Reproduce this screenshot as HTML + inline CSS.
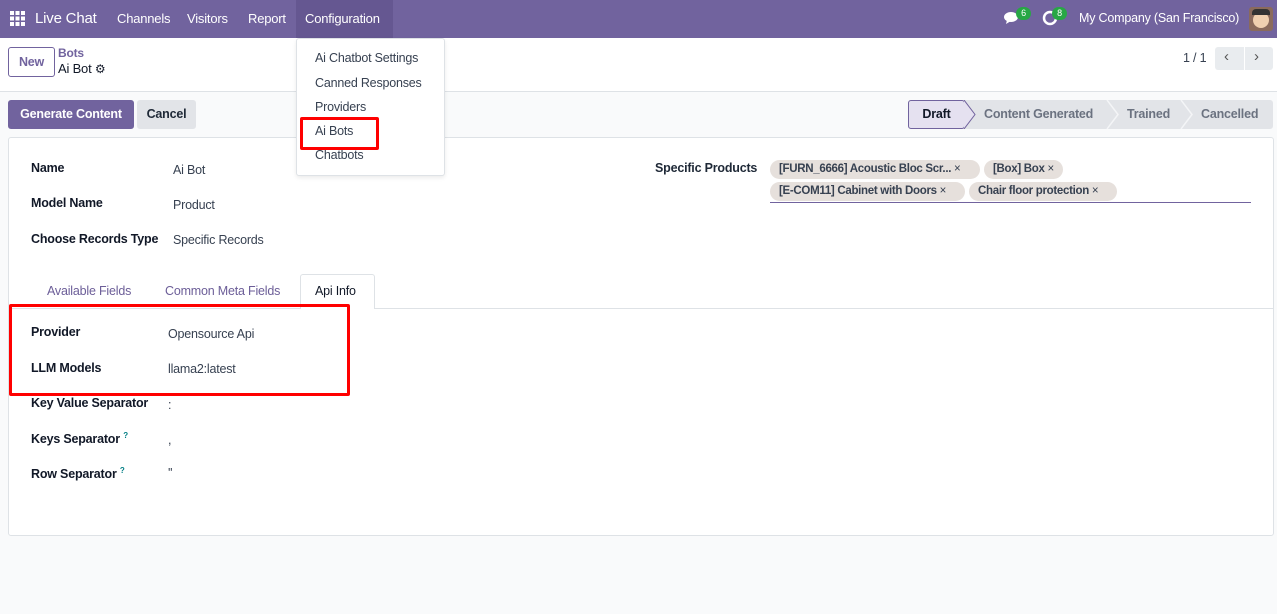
<!DOCTYPE html>
<html><head><style>
*{box-sizing:border-box;margin:0;padding:0}
body{width:1277px;height:614px;background:#f9fafb;font-family:"Liberation Sans",sans-serif;font-size:12.5px;letter-spacing:-0.2px;color:#374151;position:relative;overflow:hidden}
.abs{position:absolute}
.nav{left:0;top:0;width:1277px;height:38px;background:#71639e;color:#fff}
.nav span{position:absolute;top:11px;font-size:13px}
.cp{left:0;top:38px;width:1277px;height:54px;background:#fff;border-bottom:1px solid #dee2e6}
.b{font-weight:bold;color:#1f2937}
.tag{position:absolute;height:19px;background:#e6e0dc;border-radius:10px;font-size:11.5px;letter-spacing:-0.3px;font-weight:bold;color:#374151;padding:3px 9px;white-space:nowrap}
.lbl{position:absolute;left:31px;font-weight:bold;color:#111827}
.val{position:absolute;left:168px;color:#374151}
</style></head><body>
<div class="abs nav">
<svg class="abs" style="left:10px;top:11px" width="15" height="15"><g fill="#fff"><rect x="0" y="0" width="4" height="4"/><rect x="5.5" y="0" width="4" height="4"/><rect x="11" y="0" width="4" height="4"/><rect x="0" y="5.5" width="4" height="4"/><rect x="5.5" y="5.5" width="4" height="4"/><rect x="11" y="5.5" width="4" height="4"/><rect x="0" y="11" width="4" height="4"/><rect x="5.5" y="11" width="4" height="4"/><rect x="11" y="11" width="4" height="4"/></g></svg>
<span style="left:35px;font-size:15px;top:10px">Live Chat</span>
<span style="left:117px">Channels</span>
<span style="left:187px">Visitors</span>
<span style="left:248px">Report</span>
<div class="abs" style="left:296px;top:0;width:97px;height:38px;background:#655791"></div>
<span style="left:305px">Configuration</span>
<svg class="abs" style="left:1004px;top:11px" width="16" height="14"><ellipse cx="7" cy="6" rx="7" ry="5" fill="#fff"/><path d="M3 9 L2 13 L7 10Z" fill="#fff"/></svg>
<div class="abs" style="left:1016px;top:7px;width:15px;height:13px;border-radius:7px;background:#28a745;font-size:9px;text-align:center;line-height:13px">6</div>
<svg class="abs" style="left:1042px;top:10px" width="16" height="16"><circle cx="8" cy="8" r="6" fill="none" stroke="#fff" stroke-width="2.5"/></svg>
<div class="abs" style="left:1052px;top:7px;width:15px;height:13px;border-radius:7px;background:#28a745;font-size:9px;text-align:center;line-height:13px">8</div>
<span style="left:1079px;font-size:12.5px">My Company (San Francisco)</span>
<div class="abs" style="left:1249px;top:7px;width:24px;height:24px;border-radius:3px;background:#8a6a5c"><div class="abs" style="left:4px;top:5px;width:16px;height:16px;border-radius:8px;background:#f0d0b0"></div><div class="abs" style="left:3px;top:2px;width:18px;height:6px;background:#333;border-radius:4px 4px 0 0"></div></div>
</div>
<div class="abs cp"></div>
<div class="abs" style="left:8px;top:47px;width:47px;height:30px;border:1px solid #71639e;border-radius:3px;color:#71639e;font-weight:bold;text-align:center;line-height:28px">New</div>
<div class="abs" style="left:58px;top:46px;font-size:12px;font-weight:bold;color:#71639e">Bots</div>
<div class="abs" style="left:58px;top:61px;font-size:13px;color:#111827">Ai Bot <span style="font-size:12px">⚙</span></div>
<div class="abs" style="left:1183px;top:51px;color:#374151">1 / 1</div>
<div class="abs" style="left:1215px;top:47px;width:58px;height:23px;background:#e9ecef;border-radius:3px;color:#555;font-size:15px"><span class="abs" style="left:9px;top:1px">‹</span><div class="abs" style="left:29px;top:0;width:1px;height:23px;background:#fff"></div><span class="abs" style="left:39px;top:1px">›</span></div>

<div class="abs" style="left:8px;top:100px;width:126px;height:29px;background:#71639e;border-radius:3px;color:#fff;font-weight:bold;text-align:center;line-height:29px">Generate Content</div>
<div class="abs" style="left:137px;top:100px;width:59px;height:29px;background:#e2e4e8;border-radius:3px;color:#1f2937;font-weight:bold;text-align:center;line-height:29px">Cancel</div>

<div class="abs" style="left:908px;top:100px;width:365px;height:29px;background:#e2e4e8;border-radius:3px"></div>
<div class="abs" style="left:908px;top:100px;width:57px;height:29px;background:#e5e1f0;border:1px solid #71639e;border-radius:3px;color:#111827;font-weight:bold;text-align:center;line-height:27px">Draft</div>
<svg class="abs" style="left:964px;top:100px" width="300" height="29"><path d="M0 0 L11 14.5 L0 29" fill="#e5e1f0" stroke="#71639e"/><path d="M143 0 L154 14.5 L143 29 M217 0 L228 14.5 L217 29" fill="none" stroke="#f4f5f7" stroke-width="1.5"/></svg>
<div class="abs" style="left:984px;top:107px;color:#6b7280;font-weight:bold">Content Generated</div>
<div class="abs" style="left:1127px;top:107px;color:#6b7280;font-weight:bold">Trained</div>
<div class="abs" style="left:1201px;top:107px;color:#6b7280;font-weight:bold">Cancelled</div>

<div class="abs" style="left:8px;top:137px;width:1266px;height:399px;background:#fff;border:1px solid #dee2e6;border-radius:3px"></div>
<div class="lbl" style="top:161px">Name</div><div class="abs" style="left:173px;top:163px">Ai Bot</div>
<div class="lbl" style="top:196px">Model Name</div><div class="abs" style="left:173px;top:198px">Product</div>
<div class="lbl" style="top:232px">Choose Records Type</div><div class="abs" style="left:173px;top:233px">Specific Records</div>
<div class="abs b" style="left:655px;top:161px">Specific Products</div>
<div class="tag" style="left:770px;top:160px;width:210px">[FURN_6666] Acoustic Bloc Scr... <span style="font-weight:normal">×</span></div>
<div class="tag" style="left:984px;top:160px">[Box] Box <span style="font-weight:normal">×</span></div>
<div class="tag" style="left:770px;top:182px;width:195px">[E-COM11] Cabinet with Doors <span style="font-weight:normal">×</span></div>
<div class="tag" style="left:969px;top:182px;width:148px">Chair floor protection <span style="font-weight:normal">×</span></div>
<div class="abs" style="left:770px;top:202px;width:481px;height:1px;background:#71639e"></div>

<div class="abs" style="left:9px;top:308px;width:1264px;height:1px;background:#dee2e6"></div>
<div class="abs" style="left:47px;top:284px;color:#6c5e98">Available Fields</div>
<div class="abs" style="left:165px;top:284px;color:#6c5e98">Common Meta Fields</div>
<div class="abs" style="left:300px;top:274px;width:75px;height:35px;background:#fff;border:1px solid #dee2e6;border-bottom:none;border-radius:3px 3px 0 0"></div>
<div class="abs" style="left:315px;top:284px;color:#111827">Api Info</div>

<div class="lbl" style="top:325px">Provider</div><div class="val" style="top:327px">Opensource Api</div>
<div class="lbl" style="top:361px">LLM Models</div><div class="val" style="top:362px">llama2:latest</div>
<div class="abs" style="left:9px;top:304px;width:341px;height:92px;border:3px solid #f00;border-radius:2px"></div>
<div class="lbl" style="top:396px">Key Value Separator</div><div class="val" style="top:398px">:</div>
<div class="lbl" style="top:431px">Keys Separator <sup style="color:#017e84;font-size:8px">?</sup></div><div class="val" style="top:433px">,</div>
<div class="lbl" style="top:466px">Row Separator <sup style="color:#017e84;font-size:8px">?</sup></div><div class="val" style="top:466px">''</div>

<div class="abs" style="left:296px;top:38px;width:149px;height:138px;background:#fff;border:1px solid #dee2e6;border-radius:3px;box-shadow:0 2px 4px rgba(0,0,0,.08)"></div>
<div class="abs" style="left:315px;top:51px;color:#374151">Ai Chatbot Settings</div>
<div class="abs" style="left:315px;top:76px;color:#374151">Canned Responses</div>
<div class="abs" style="left:315px;top:100px;color:#374151">Providers</div>
<div class="abs" style="left:315px;top:124px;color:#374151">Ai Bots</div>
<div class="abs" style="left:315px;top:148px;color:#374151">Chatbots</div>
<div class="abs" style="left:300px;top:117px;width:79px;height:33px;border:3px solid #f00;border-radius:2px"></div>
</body></html>
